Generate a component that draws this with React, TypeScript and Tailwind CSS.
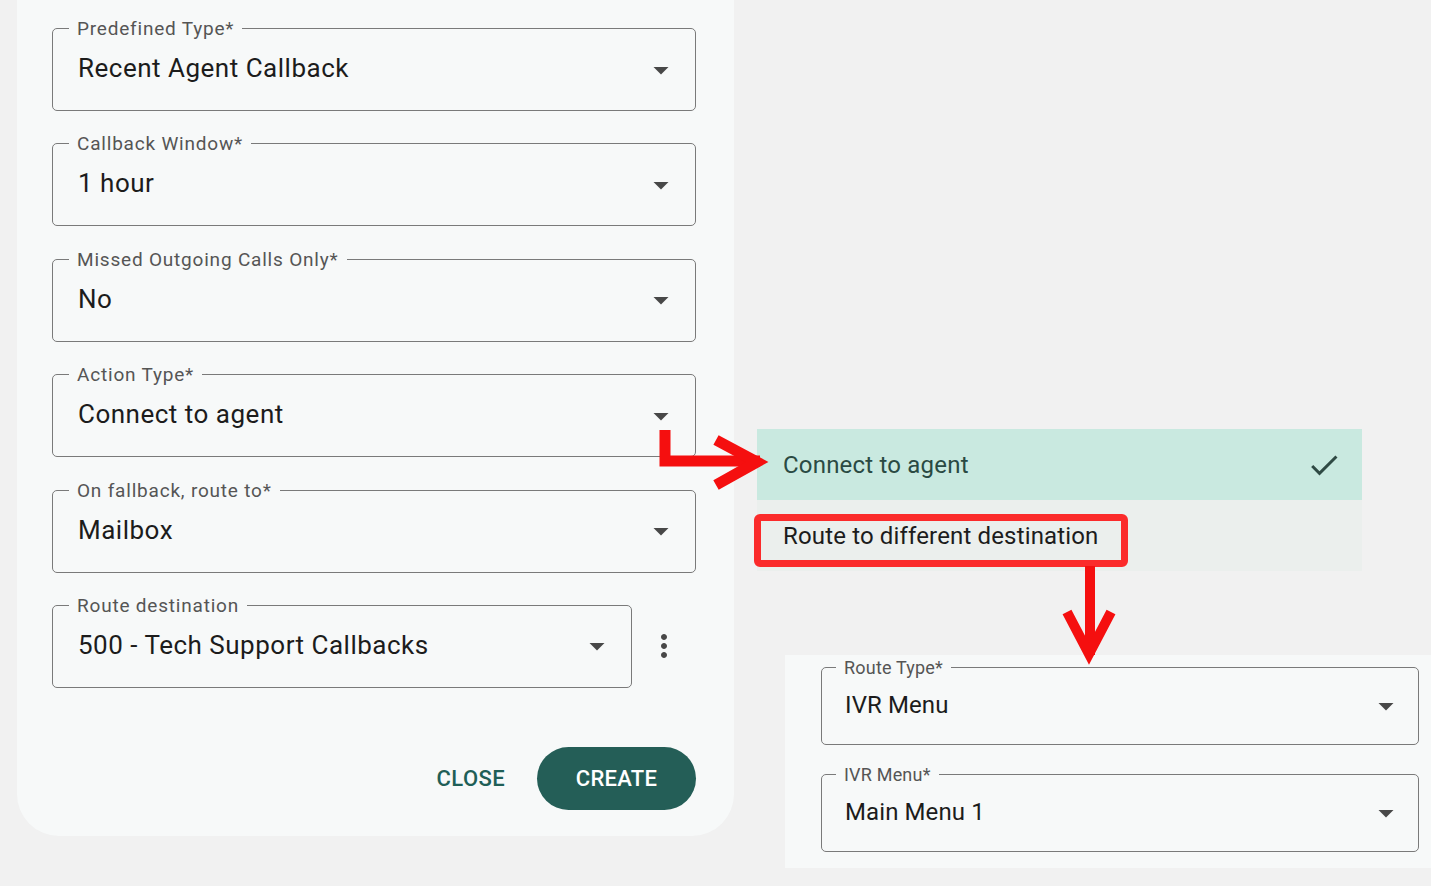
import React from "react"

const font = { fontFamily: "Roboto, 'Noto Sans', Arial, sans-serif" }

function DropArrow({ className = "" }: { className?: string }) {
  return (
    <svg viewBox="0 0 24 24" className={className} fill="currentColor">
      <path d="M7 10l5 5 5-5z" />
    </svg>
  )
}

function Field({
  label,
  value,
  small = false,
  className = "",
}: {
  label: string
  value: string
  small?: boolean
  className?: string
}) {
  return (
    <div
      className={
        "relative flex items-center rounded-[5px] border border-[#7a7a7a] " +
        (small ? "h-[78px] pl-[23px] pr-[14px] " : "h-[83px] pl-[25px] pr-[16px] ") +
        className
      }
    >
      <span
        className={
          "absolute bg-[#f7f9f9] leading-none text-[#555] " +
          (small
            ? "-top-[9px] left-[14px] px-[8px] text-[18px] tracking-[0.2px]"
            : "-top-[10px] left-[16px] px-[8px] text-[19px] tracking-[0.8px]")
        }
      >
        {label}
      </span>
      <span
        className={
          "flex-1 pb-[2px] text-[#1c1c1c] " +
          (small ? "text-[24px] tracking-[0.1px]" : "text-[26px] tracking-[0.5px]")
        }
      >
        {value}
      </span>
      <DropArrow className="h-[36px] w-[36px] text-[#484848]" />
    </div>
  )
}

export default function App() {
  return (
    <div style={font} className="relative flex h-[886px] w-[1431px] overflow-hidden bg-[#f1f1f1]">
      {/* dialog panel */}
      <div className="ml-[17px] flex h-[836px] w-[717px] flex-col rounded-b-[42px] bg-[#f7f9f9] pl-[35px] pr-[38px] pt-[28px]">
        <div className="flex flex-col gap-[32.4px]">
          <Field label="Predefined Type*" value="Recent Agent Callback" />
          <Field label="Callback Window*" value="1 hour" />
          <Field label="Missed Outgoing Calls Only*" value="No" />
          <Field label="Action Type*" value="Connect to agent" />
          <Field label="On fallback, route to*" value="Mailbox" />
          <div className="flex items-center">
            <Field label="Route destination" value="500 - Tech Support Callbacks" className="w-[580px]" />
            <svg viewBox="0 0 24 24" className="ml-[14px] h-[36px] w-[36px] text-[#484848]" fill="currentColor">
              <path d="M12 8c1.1 0 2-.9 2-2s-.9-2-2-2-2 .9-2 2 .9 2 2 2zm0 2c-1.1 0-2 .9-2 2s.9 2 2 2 2-.9 2-2-.9-2-2-2zm0 6c-1.1 0-2 .9-2 2s.9 2 2 2 2-.9 2-2-.9-2-2-2z" />
            </svg>
          </div>
        </div>
        <div className="mt-[59px] flex items-center justify-end gap-[32px]">
          <button className="text-[22px] font-medium tracking-[0.4px] text-[#1f5f57]">CLOSE</button>
          <button className="flex h-[63px] w-[159px] items-center justify-center rounded-full bg-[#245e57] text-[22px] font-medium tracking-[0.3px] text-white">
            CREATE
          </button>
        </div>
      </div>

      {/* right column: menu and route fields */}
      <div className="flex flex-col">
        <div className="ml-[23px] mt-[429px] w-[605px]">
          <div className="flex h-[71px] items-center justify-between bg-[#c9e9e0] pl-[26px] pr-[20px]">
            <span className="text-[24px] tracking-[0.2px] text-[#2a4a43]">Connect to agent</span>
            <svg viewBox="0 0 24 24" className="h-[36px] w-[36px] text-[#2f4a44]" fill="currentColor">
              <path d="M9 16.17 4.83 12l-1.42 1.41L9 19 21 7l-1.41-1.41z" />
            </svg>
          </div>
          <div className="flex h-[71px] items-center bg-[#ebefed] pl-[26px]">
            <span className="text-[24px] tracking-[0.15px] text-[#1c1c1c]">Route to different destination</span>
          </div>
        </div>
        <div className="ml-[51px] mt-[84px] flex h-[213px] w-[646px] flex-col gap-[29px] bg-[#f7f9f9] pl-[36px] pr-[12px] pt-[12px]">
          <Field small label="Route Type*" value="IVR Menu" />
          <Field small label="IVR Menu*" value="Main Menu 1" />
        </div>
      </div>

      {/* annotations */}
      <div className="pointer-events-none absolute left-[754px] top-[514px] h-[53px] w-[374px] rounded-[6px] border-[7px] border-[#fb2b2b]" />
      <svg className="pointer-events-none absolute left-0 top-0" width="1431" height="886">
        <g fill="none" stroke="#f50f0f" strokeLinejoin="miter" strokeMiterlimit={6}>
          <path d="M665 430 V461 H760" strokeWidth={11} />
          <path d="M716 440 L757 462 L716 485" strokeWidth={11} />
          <path d="M1090 566 V655" strokeWidth={10} />
          <path d="M1067 612 L1089 654 L1111 612" strokeWidth={10} />
        </g>
      </svg>
    </div>
  )
}
